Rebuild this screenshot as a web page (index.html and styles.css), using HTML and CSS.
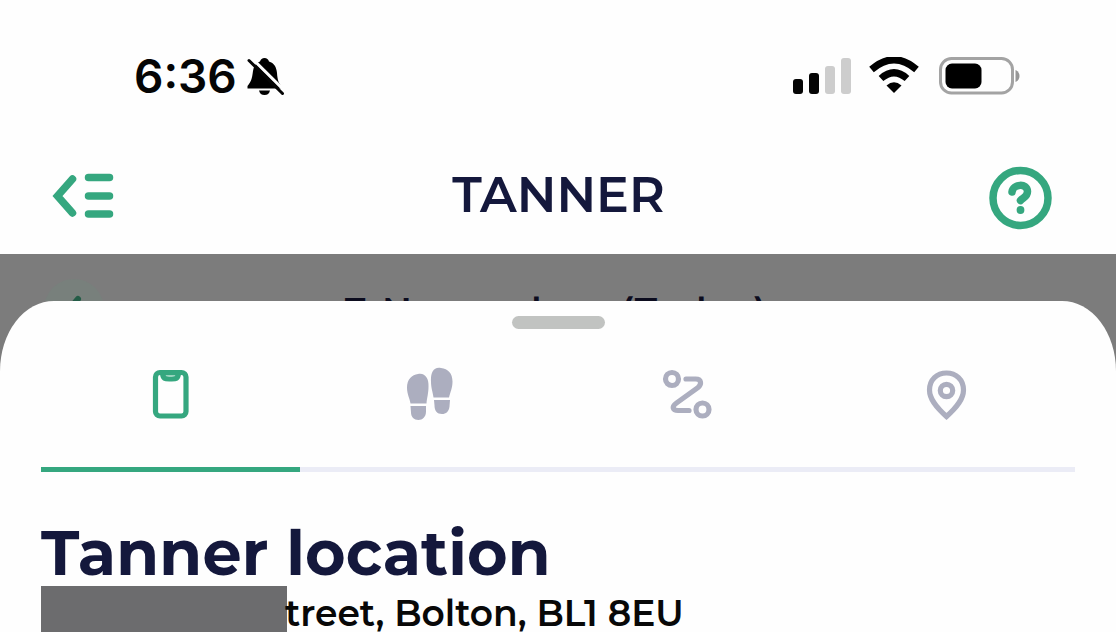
FILE: index.html
```html
<!DOCTYPE html>
<html lang="en">
<head>
<meta charset="utf-8">
<title>Tanner</title>
<link rel="stylesheet" href="styles.css">
</head>
<body>
<div class="screen">
  <header class="status">
    <div class="clock">
      <span class="time">6:36</span>
      <svg class="bell" width="40" height="40" viewBox="0 0 40 40">
        <path d="M3.500 32.500V30C7 26 8 23 9 15C10 9 13 6.500 16 5.500Q17 2 20.500 2Q24 2 25 5.500C30 7 32.500 11 33 17C33.500 24 34.500 27 38 31V32.500Z"/>
        <path d="M15 34.500h11q-1 4.500-5.500 4.500T15 34.500Z"/>
        <path class="gap" d="M7 1.500L42 36"/>
        <path class="slash" d="M5 4.500L38.500 37.500"/>
      </svg>
    </div>
    <div class="indicators">
      <div class="signal"><i class="b1"></i><i class="b2"></i><i class="b3"></i><i class="b4"></i></div>
      <svg class="wifi" width="50" height="37" viewBox="0 0 50 37">
        <path class="arc" d="M2.500 12.500Q25-7 47.500 12.500M12 21.500Q25 10 38 21.500"/>
        <path d="M17.500 28.500Q25 22 32.500 28.500L25 36Z"/>
      </svg>
      <svg class="battery" width="82" height="38" viewBox="0 0 82 38">
        <rect class="case" x="1.500" y="1.500" width="72" height="34.500" rx="11"/>
        <rect x="6.500" y="6.500" width="36" height="25" rx="6.500"/>
        <path class="cap" d="M76.500 13Q80.500 15 80.500 19T76.500 25Z"/>
      </svg>
    </div>
  </header>
  <nav class="bar">
    <svg width="64" height="50" viewBox="0 0 64 50" class="green-line">
      <path d="M22.500 8L7.500 25L22.500 42M38.500 6.500H59.500M38.500 25H59.500M38.500 43H59.500"/>
    </svg>
    <h1 class="title">TANNER</h1>
    <svg width="64" height="64" viewBox="0 0 64 64" class="help">
      <circle cx="32.500" cy="32" r="27.500"/>
      <path d="M24 26C25 18 39 16.500 39.500 25.500C39.500 31 35 31.500 32.500 34.500"/>
      <circle class="dot" cx="32.500" cy="44" r="3.900"/>
    </svg>
  </nav>
  <main class="backdrop">
    <div class="behind">
      <div class="round"><svg width="60" height="60" viewBox="0 0 60 60"><path d="M34 20L22 34L34 48"/></svg></div>
      <div class="date"><span class="day">7</span><span class="month">November</span><span class="today">(Today)</span></div>
    </div>
    <section class="sheet">
      <div class="handle"></div>
      <div class="tabs">
        <div class="tab active">
          <svg width="50" height="54" viewBox="0 0 50 54" class="stroke">
            <rect x="10.500" y="5.500" width="30.500" height="43.500" rx="4.500"/>
            <path d="M17.500 6C18 12.500 20.500 12 25.500 12S33 12.500 33.500 6Z"/>
          </svg>
        </div>
        <div class="tab">
          <svg width="50" height="54" viewBox="-1 -0.500 50 54" class="fill">
            <path d="M13 6.500C20 5 24 11 23.500 19C23.500 26 22 30 21.500 36H5.500C4.500 30 2 27 2 20C2 12 7 7 13 6.500Z"/>
            <path d="M5.500 38.500H21V44C21 49.500 17.500 52.500 13.500 52.500C9 52.500 6 49.500 6 45Z"/>
            <path d="M36 0.500C28 -1 25.500 6 26 14C26 21 28 25 28.500 30H44C45 25 47.500 21 47.500 14C47.500 6 43 1 36 .5Z"/>
            <path d="M29 32.500H45L44.500 39C44 44 41 46.500 37 46.500C32 46.500 29.500 43 29.500 38Z"/>
          </svg>
        </div>
        <div class="tab">
          <svg width="50" height="54" viewBox="0 0 50 54" class="stroke">
            <circle cx="10" cy="12" r="6.500"/>
            <circle cx="40.500" cy="42.500" r="6.500"/>
            <path class="round-line" d="M24 12H33.500C40 12 39.500 17.500 36 20.500L14.500 36C9 40 11 43.500 16 43.500H27"/>
          </svg>
        </div>
        <div class="tab">
          <svg width="50" height="54" viewBox="0 0 50 54" class="stroke">
            <path d="M25.500 49.500C15 40 8.500 32 8.500 23C8.500 12.500 16 6 25.500 6S42.500 12.500 42.500 23C42.500 32 36 40 25.500 49.500Z"/>
            <circle cx="25.500" cy="23.500" r="6.200"/>
          </svg>
        </div>
      </div>
      <h2 class="heading">Tanner location</h2>
      <div class="address"><span class="redacted"></span><span class="street">treet, Bolton, BL1 8EU</span></div>
    </section>
  </main>
</div>
</body>
</html>
```
FILE: styles.css
```css
* { box-sizing: border-box; }
body { margin: 0; background: #fefefe; font-family: Montserrat, Inter, "Open Sans", sans-serif; }
svg { display: block; flex: none; }
.screen { width: 1116px; height: 632px; overflow: hidden; display: flex; flex-direction: column; }
.status { height: 153px; flex: none; display: flex; justify-content: space-between; padding: 0 95px 2px 134px; color: #050505; }
.clock { display: flex; align-items: center; gap: 7px; }
.time { font: 600 46px/1 Inter, sans-serif; padding-top: 1px; }
.slash { stroke: #050505; stroke-width: 3; stroke-linecap: round; }
.gap { stroke: #fefefe; stroke-width: 3; }
.indicators { display: flex; align-items: center; }
.signal { display: flex; align-items: flex-end; gap: 6px; height: 36px; margin-right: 18px; }
.signal i { width: 10px; border-radius: 3px; background: #050505; }
.signal .b1 { height: 15px; }
.signal .b2 { height: 21px; }
.signal .b3 { height: 28px; background: #cdcdcd; }
.signal .b4 { height: 36px; background: #cdcdcd; }
.wifi { margin-right: 20px; }
.arc { fill: none; stroke: #000; stroke-width: 7; }
.case { fill: none; stroke: #a3a3a3; stroke-width: 3; }
.cap { fill: #969696; }
.bar { height: 101px; flex: none; display: flex; align-items: flex-start; justify-content: space-between; padding: 13px 64px 0 50px; }
.green-line { margin-top: 5px; fill: none; stroke: #35a77f; stroke-width: 7.5; stroke-linecap: round; }
.title { margin: 5px 0 0 15px; font-size: 49px; line-height: 48px; font-weight: 600; color: #14183c; }
.help { fill: none; stroke: #35a77f; stroke-width: 7.5; stroke-linecap: round; }
.help .dot { fill: #35a77f; stroke: none; }
.backdrop { flex: 1; background: #7c7c7c; display: flex; flex-direction: column; }
.behind { height: 47px; flex: none; display: flex; overflow: hidden; }
.round { width: 60px; height: 60px; margin: 25px 0 0 44px; border-radius: 30px; background: #78807c; flex: none; }
.round path { fill: none; stroke: #245c47; stroke-width: 6; stroke-linecap: round; }
.date { display: flex; margin: 39px 0 0 240px; font-size: 37px; line-height: 36px; font-weight: 600; color: #0c0c1e; }
.day { width: 38px; }
.month { width: 239px; letter-spacing: 2.600px; }
.today { letter-spacing: 1.200px; }
.sheet { flex: 1; background: #fefefe; border-radius: 54px 54px 0 0 / 70px 70px 0 0; padding: 15px 41px 0; display: flex; flex-direction: column; }
.handle { width: 93px; height: 13px; border-radius: 7px; background: #c1c3c1; align-self: center; flex: none; }
.tabs { display: flex; height: 143px; flex: none; }
.tab { flex: 1; display: flex; justify-content: center; padding-top: 38px; border-bottom: 5px solid #ebecf6; color: #acaebf; }
.tab.active { color: #35a77f; border-color: #35a77f; }
.stroke { fill: none; stroke: currentColor; stroke-width: 5.2; }
.round-line { stroke-linecap: round; }
.fill { fill: currentColor; }
.heading { margin: 51px 0 0; font-size: 62px; line-height: 60px; font-weight: 700; letter-spacing: .15px; color: #14183c; white-space: nowrap; }
.address { display: flex; height: 47px; flex: none; margin-top: 3px; white-space: nowrap; }
.redacted { width: 246px; background: #6c6c6e; flex: none; }
.street { margin-left: -2px; font-size: 36px; line-height: 55px; font-weight: 600; color: #080808; }
```
